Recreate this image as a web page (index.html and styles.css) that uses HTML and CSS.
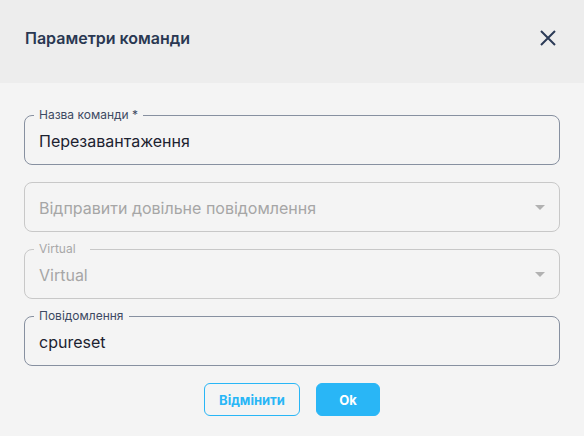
FILE: index.html
```html
<!DOCTYPE html>
<html lang="uk">
<head>
<meta charset="utf-8">
<title>Параметри команди</title>
<link rel="stylesheet" href="styles.css">
</head>
<body>
<div class="dialog">
  <header class="dialog-header">
    <h2 class="dialog-title">Параметри команди</h2>
    <button class="close-btn" aria-label="Закрити">
      <svg width="16" height="16" viewBox="0 0 16 16"><path d="M1 1L15 15M15 1L1 15" stroke="#2c3b57" stroke-width="2" stroke-linecap="butt" fill="none"/></svg>
    </button>
  </header>
  <div class="dialog-body">
    <div class="field">
      <span class="field-label">Назва команди *</span>
      <span class="field-value">Перезавантаження</span>
    </div>
    <div class="field disabled">
      <span class="field-value">Відправити довільне повідомлення</span>
      <span class="caret"></span>
    </div>
    <div class="field disabled">
      <span class="field-label wide-notch">Virtual</span>
      <span class="field-value">Virtual</span>
      <span class="caret"></span>
    </div>
    <div class="field">
      <span class="field-label">Повідомлення</span>
      <span class="field-value">cpureset</span>
    </div>
    <div class="actions">
      <button class="btn btn-outline">Відмінити</button>
      <button class="btn btn-primary">Ok</button>
    </div>
  </div>
</div>
</body>
</html>
```

FILE: styles.css
```css
* { box-sizing: border-box; }
html, body {
  margin: 0;
  padding: 0;
  background: #f4f4f4;
  font-family: Inter, "Noto Sans", "DejaVu Sans", sans-serif;
}
.dialog {
  width: 584px;
  height: 436px;
  background: #f4f4f4;
  display: flex;
  flex-direction: column;
}
.dialog-header {
  height: 83px;
  background: #ededed;
  display: flex;
  align-items: center;
  justify-content: space-between;
  padding: 0 28px 8px 25px;
}
.dialog-title {
  margin: 0;
  font-size: 16px;
  font-weight: 600;
  color: #2a3852;
  letter-spacing: 0;
}
.close-btn {
  border: 0;
  background: transparent;
  padding: 0;
  width: 16px;
  height: 16px;
  display: flex;
  cursor: pointer;
}
.dialog-body {
  display: flex;
  flex-direction: column;
  gap: 17px;
  padding: 32px 24px 0 24px;
}
.field {
  position: relative;
  height: 50px;
  border: 1px solid #8790a0;
  border-radius: 8px;
  display: flex;
  align-items: center;
  padding: 0 14px;
}
.field.disabled {
  border-color: #c8c8c8;
}
.field-label {
  position: absolute;
  top: -9px;
  left: 9px;
  padding: 0 5px;
  background: #f4f4f4;
  font-size: 12px;
  line-height: 16px;
  color: #3d4a63;
}
.field-label.wide-notch {
  padding-right: 14px;
}
.field.disabled .field-label {
  color: #a8a8a8;
}
.field-value {
  font-size: 16px;
  color: #1c2230;
  flex: 1;
  padding-top: 1px;
}
.field.disabled .field-value {
  color: #a6a6a6;
}
.caret {
  width: 0;
  height: 0;
  border-left: 5px solid transparent;
  border-right: 5px solid transparent;
  border-top: 5px solid #b2b2b2;
}
.actions {
  display: flex;
  justify-content: center;
  gap: 16px;
}
.btn {
  height: 33px;
  border-radius: 6px;
  font-family: Inter, "Noto Sans", sans-serif;
  font-size: 13px;
  font-weight: 700;
  cursor: pointer;
}
.btn-outline {
  width: 96px;
  background: transparent;
  border: 1px solid #29b6f6;
  color: #29b6f6;
}
.btn-primary {
  width: 64px;
  background: #29b6f6;
  border: 1px solid #29b6f6;
  color: #ffffff;
}
```
